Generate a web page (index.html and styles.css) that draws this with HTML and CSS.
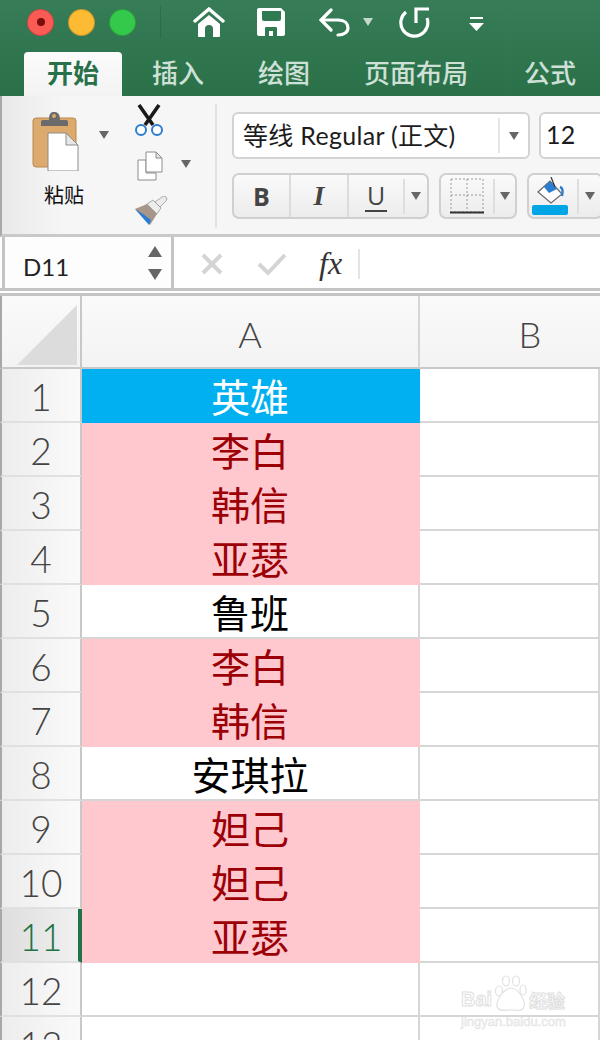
FILE: index.html
```html
<!DOCTYPE html>
<html>
<head lang="zh">
    <meta charset="UTF-8">
    <title>Excel</title>
    <link rel="stylesheet" href="styles.css">
</head>
<body>
<div class="wrap">
    <div class="top">
        <div class="titlebar">
            <div class="lights">
                <span class="light red"><i></i></span>
                <span class="light yellow"></span>
                <span class="light green"></span>
            </div>
            <span class="sep"></span>
            <svg class="qa home" width="32" height="31" viewBox="0 0 32 31"><path d="M2 14 16 2 30 14" fill="none" stroke="#fff" stroke-width="3.400" stroke-linecap="round"/><path d="M5 17 16 8 27 17V29a1 1 0 0 1-1 1H20V22a4 4 0 0 0-8 0V30H6a1 1 0 0 1-1-1Z" fill="#fff"/></svg>
            <svg class="qa save" width="28" height="28" viewBox="0 0 28 28"><path d="M2 0H24L28 4V26a2 2 0 0 1-2 2H2a2 2 0 0 1-2-2V2a2 2 0 0 1 2-2Z" fill="#fff"/><path d="M5 3H24V11a2 2 0 0 1-2 2H7a2 2 0 0 1-2-2Z" fill="#2f7a50"/><path d="M8 28V20a1 1 0 0 1 1-1H19a1 1 0 0 1 1 1V28H16V23H12V28Z" fill="#2f7a50"/></svg>
            <svg class="qa undo" width="31" height="29" viewBox="0 0 31 29"><path d="M12 2 2 12 12 22" fill="none" stroke="#fff" stroke-width="3.200" stroke-linecap="round"/><path d="M3 12H19C26 12 29 16 29 20S25 27 19 27" fill="none" stroke="#fff" stroke-width="3.200" stroke-linecap="round"/></svg>
            <span class="caret light-caret"></span>
            <svg class="qa redo" width="32" height="32" viewBox="0 0 32 32"><path d="M8 6A13.500 13.500 0 1 0 29 12" fill="none" stroke="#fff" stroke-width="3.200"/><path d="M18 17V3H31" fill="none" stroke="#fff" stroke-width="3.200"/></svg>
            <svg class="qa more" width="16" height="15" viewBox="0 0 16 15"><path d="M1 0H14V2H1ZM0 6H15L7.500 14Z" fill="#fff"/></svg>
        </div>
        <div class="tabs">
            <span class="tab active">开始</span>
            <span class="tab">插入</span>
            <span class="tab">绘图</span>
            <span class="tab">页面布局</span>
            <span class="tab">公式</span>
        </div>
    </div>
    <div class="ribbon">
        <div class="paste">
            <div class="paste-icon">
                <svg width="50" height="60" viewBox="0 0 50 60"><rect x="1" y="7" width="43" height="49" rx="3" fill="#dcaa6c" stroke="#b98a4e"/><path d="M9 14V10a2 2 0 0 1 2-2H17C17 1 19 0 22 0S28 1 28 8H34a2 2 0 0 1 2 2V14Z" fill="#6b6b6b" transform="translate(0 1)"/><circle cx="22" cy="5" r="2" fill="#dcaa6c"/><path d="M16 22H34L46 34V60H16Z" fill="#fff" stroke="#8c8c8c"/><path d="M34 22V34H46Z" fill="#e6e6e6" stroke="#8c8c8c"/></svg>
                <span class="caret"></span>
            </div>
            <span class="paste-label">粘贴</span>
        </div>
        <div class="tools">
            <svg width="30" height="34" viewBox="0 0 30 34"><path d="M5 1 19 21M25 1 11 21" stroke="#1a1a1a" stroke-width="3.600" fill="none"/><circle cx="7" cy="26" r="5" fill="#fff" stroke="#2b7cd3" stroke-width="2"/><circle cx="23" cy="26" r="5" fill="#fff" stroke="#2b7cd3" stroke-width="2"/></svg>
            <div class="copy">
                <svg width="28" height="30" viewBox="0 0 28 30"><path d="M2 9H10V22H20V29H2Z" fill="#fff" stroke="#8c8c8c"/><path d="M10 1H20L26 7V21H10Z" fill="#fff" stroke="#8c8c8c"/><path d="M20 1V7H26Z" fill="#e6e6e6" stroke="#8c8c8c"/></svg>
                <span class="caret"></span>
            </div>
            <svg class="brush" width="34" height="30" viewBox="0 0 34 30"><path d="M1 13 13 8 23 18 16 29Z" fill="#a8968a"/><path d="M1 13 9 18 17 24 15 29Z" fill="#2b7cd3"/><path d="M13 8 19 4 27 12 23 18Z" fill="#ececec" stroke="#8c8c8c" stroke-width=".7"/><path d="M21 6 28 1a2.500 2.500 0 0 1 4 4L26 11Z" fill="#ececec" stroke="#8c8c8c" stroke-width=".7"/></svg>
        </div>
        <span class="ribbon-sep"></span>
        <div class="fontgroup">
            <div class="fontrow">
                <div class="select fontname">
                    <span class="select-text">等线 Regular (正文)</span>
                    <span class="select-arrow"><span class="caret"></span></span>
                </div>
                <div class="select fontsize"><span class="select-text">12</span></div>
            </div>
            <div class="fontrow second">
                <div class="btngroup">
                    <span class="btn bold">B</span>
                    <span class="btn italic">I</span>
                    <span class="btn under"><span class="u-letter">U</span></span>
                    <span class="btn-arrow"><span class="caret"></span></span>
                </div>
                <div class="btngroup narrow">
                    <span class="btn borders"><svg width="34" height="36" viewBox="0 0 34 36"><path d="M1 1H33V34H1ZM17 1V33M1 17H33" fill="none" stroke="#9a9a9a" stroke-dasharray="2 2"/><path d="M0 34.500H34" stroke="#333" stroke-width="2"/></svg></span>
                    <span class="btn-arrow"><span class="caret"></span></span>
                </div>
                <div class="btngroup">
                    <span class="btn bucket"><svg width="36" height="38" viewBox="0 0 36 38"><path d="M6 15 18 4 30 17 19 26Z" fill="#fff" stroke="#666" stroke-width="1.200"/><path d="M12 10 18 4 25 12 17 16Z" fill="#2b7cd3"/><path d="M19 0 23 10" stroke="#333" stroke-width="1.200"/><path d="M28 10C31 11 31 15 30 19" stroke="#2b7cd3" stroke-width="2.400" fill="none"/><rect y="28" width="36" height="10" rx="2" fill="#00a5e6"/></svg></span>
                    <span class="btn-arrow"><span class="caret"></span></span>
                </div>
            </div>
        </div>
    </div>
    <div class="formula">
        <div class="namebox">
            <span class="cellname">D11</span>
            <span class="stepper"><i class="up"></i><i class="down"></i></span>
        </div>
        <div class="fx-tools">
            <svg class="fx-x" width="24" height="24" viewBox="0 0 24 24"><path d="M3 3 21 21M21 3 3 21" stroke="#d4d4d4" stroke-width="4"/></svg>
            <svg class="fx-ok" width="30" height="24" viewBox="0 0 30 24"><path d="M2 12 11 21 28 3" fill="none" stroke="#d4d4d4" stroke-width="4"/></svg>
            <span class="fx">fx</span>
            <span class="fx-sep"></span>
        </div>
    </div>
    <div class="sheet">
        <div class="corner"><span class="corner-tri"></span></div>
        <div class="colhead">A</div>
        <div class="colhead">B</div>

        <div class="rowhead">1</div><div class="cell title">英雄</div><div class="cell"></div>
        <div class="rowhead">2</div><div class="cell dup">李白</div><div class="cell"></div>
        <div class="rowhead">3</div><div class="cell dup">韩信</div><div class="cell"></div>
        <div class="rowhead">4</div><div class="cell dup">亚瑟</div><div class="cell"></div>
        <div class="rowhead">5</div><div class="cell">鲁班</div><div class="cell"></div>
        <div class="rowhead">6</div><div class="cell dup">李白</div><div class="cell"></div>
        <div class="rowhead">7</div><div class="cell dup">韩信</div><div class="cell"></div>
        <div class="rowhead">8</div><div class="cell">安琪拉</div><div class="cell"></div>
        <div class="rowhead">9</div><div class="cell dup">妲己</div><div class="cell"></div>
        <div class="rowhead">10</div><div class="cell dup">妲己</div><div class="cell"></div>
        <div class="rowhead current">11</div><div class="cell dup">亚瑟</div><div class="cell"></div>
        <div class="rowhead">12</div><div class="cell"></div><div class="cell"></div>
        <div class="rowhead">13</div><div class="cell"></div><div class="cell"></div>
    </div>
    <div class="mark">
        <div class="mark-top">
            <span class="mark-bai">Bai</span>
            <svg width="36" height="38" viewBox="0 0 36 38"><g fill="#fff" stroke="#e2e2e2" stroke-width="1.200"><ellipse cx="6" cy="16" rx="3.500" ry="5"/><ellipse cx="13" cy="6" rx="3.500" ry="5"/><ellipse cx="23" cy="6" rx="3.500" ry="5"/><ellipse cx="30" cy="15" rx="3" ry="5"/><path d="M18 13C24 13 33 24 31 32 29 37 23 35 18 35S6 37 4 32C3 25 11 13 18 13Z"/></g><text x="9" y="32" class="mark-du">du</text></svg>
            <span class="mark-cn">经验</span>
        </div>
        <div class="mark-url">jingyan.baidu.com</div>
    </div>
</div>
</body>
</html>
```

FILE: styles.css
```css
html, body{
    margin: 0;
    padding: 0;
}
body{
    font-family: "Lato", "Noto Sans CJK SC", sans-serif;
    background: #fff;
}
.wrap{
    width: 600px;
    height: 1040px;
    overflow: hidden;
    position: relative;
}
.top{
    height: 96px;
    background: linear-gradient(#367d58, #2a7149);
}
.titlebar{
    height: 52px;
    display: flex;
    align-items: center;
}
.lights{
    display: flex;
    gap: 14px;
    margin-left: 27px;
}
.light{
    width: 25px;
    height: 25px;
    border-radius: 50%;
    border: 1px solid rgba(0,0,0,.2);
    display: flex;
    align-items: center;
    justify-content: center;
    margin-top: -8px;
}
.light i{
    width: 8px;
    height: 8px;
    border-radius: 50%;
    background: #7a0c0c;
}
.red{ background: #fb5b55; }
.yellow{ background: #fdbb34; }
.green{ background: #35c94b; }
.sep{
    width: 1px;
    height: 32px;
    margin: -8px 0 0 24px;
    background: rgba(0,0,0,.12);
}
.qa{
    margin-top: -8px;
    flex: none;
}
.home{ margin-left: 32px; }
.save{ margin-left: 32px; }
.undo{ margin-left: 34px; }
.redo{ margin-left: 25px; }
.more{ margin-left: 39px; margin-top: -4px; }
.caret{
    display: inline-block;
    flex: none;
    width: 0;
    height: 0;
    border-left: 5px solid transparent;
    border-right: 5px solid transparent;
    border-top: 8px solid #666;
}
.light-caret{
    border-top-color: #c5d8cd;
    margin: -8px 0 0 13px;
}
.tabs{
    height: 44px;
    display: flex;
    align-items: stretch;
    padding-left: 24px;
    font-family: "Noto Sans CJK SC", sans-serif;
    font-size: 26px;
    font-weight: 500;
    color: #cfe0d6;
}
.tab{
    line-height: 39px;
    margin-left: 54px;
    white-space: nowrap;
}
.tab:nth-child(2){ margin-left: 30px; }
.tab:nth-child(5){ margin-left: 56px; }
.tab.active{
    margin-left: 0;
    width: 98px;
    text-align: center;
    background: linear-gradient(#fbfbfb, #f3f3f3);
    color: #27704a;
    font-weight: 700;
    border-radius: 4px 4px 0 0;
}
.ribbon{
    height: 141px;
    box-sizing: border-box;
    background: linear-gradient(90deg, #e9e9e9, #f6f6f6 60px);
    border-bottom: 3px solid #c9c9c9;
    border-left: 2px solid #a8a8a8;
    display: flex;
}
.paste{
    flex: none;
    width: 114px;
    padding: 13px 0 0 30px;
    box-sizing: border-box;
}
.paste-icon{
    display: flex;
    align-items: center;
    height: 60px;
    margin-top: 2px;
}
.paste-icon .caret{
    margin: -12px 0 0 17px;
}
.paste-label{
    display: block;
    font-family: "Noto Sans CJK SC", sans-serif;
    font-size: 20px;
    line-height: 30px;
    margin: 9px 0 0 12px;
    color: #111;
}
.tools{
    flex: none;
    width: 100px;
    padding: 8px 0 0 18px;
    box-sizing: border-box;
    display: flex;
    flex-direction: column;
}
.copy{
    display: flex;
    align-items: center;
    margin: 12px 0 0 2px;
    height: 32px;
}
.copy .caret{
    margin: -4px 0 0 17px;
}
.brush{
    margin-top: 14px;
}
.ribbon-sep{
    flex: none;
    width: 2px;
    height: 124px;
    margin: 8px 0 0 -1px;
    background: #e2e2e2;
}
.fontgroup{
    margin-left: 15px;
    padding-top: 16px;
    flex: none;
}
.fontrow{
    display: flex;
}
.fontrow.second{
    margin-top: 14px;
    gap: 10px;
}
.select{
    height: 47px;
    box-sizing: border-box;
    background: #fff;
    border: 2px solid #d3d3d3;
    border-radius: 6px;
    display: flex;
    align-items: center;
    font-size: 25px;
    letter-spacing: .3px;
    color: #1c1c1c;
}
.fontname{
    width: 298px;
}
.fontsize{
    width: 80px;
    margin-left: 9px;
}
.fontsize .select-text{
    padding-left: 5px;
}
.select-text{
    padding: 0 0 4px 9px;
    flex: 1;
    white-space: nowrap;
}
.select-arrow{
    width: 28px;
    height: 35px;
    border-left: 2px solid #e6e6e6;
    display: flex;
    align-items: center;
    justify-content: center;
}
.btngroup{
    height: 46px;
    box-sizing: border-box;
    display: flex;
    align-items: center;
    background: linear-gradient(#fafafa, #ececec);
    border: 2px solid #d0d0d0;
    border-radius: 7px;
}
.btn{
    height: 42px;
    display: flex;
    align-items: center;
    justify-content: center;
    color: #444;
}
.bold{
    width: 55px;
    border-right: 2px solid #dcdcdc;
    font: bold 25px "Open Sans", sans-serif;
}
.italic{
    width: 56px;
    border-right: 2px solid #dcdcdc;
    font: italic bold 28px "Liberation Serif", serif;
}
.under{
    width: 54px;
    font: 25px "Open Sans", sans-serif;
}
.u-letter{
    border-bottom: 2px solid #444;
    line-height: 29px;
    padding: 0 2px;
}
.btn-arrow{
    width: 22px;
    height: 35px;
    border-left: 2px solid #dedede;
    display: flex;
    align-items: center;
    justify-content: center;
}
.narrow .btn-arrow{
    width: 20px;
}
.borders{
    width: 52px;
}
.bucket{
    width: 45px;
    padding-left: 3px;
    justify-content: flex-start;
}
.formula{
    height: 54px;
    display: flex;
    background: #fff;
    border-bottom: 3px solid #c4c4c4;
    box-sizing: border-box;
}
.namebox{
    flex: none;
    width: 172px;
    height: 51px;
    box-sizing: border-box;
    margin-left: 2px;
    padding-top: 7px;
    border: 3px solid #c4c4c4;
    border-bottom: 0;
    border-top: 0;
    display: flex;
    align-items: center;
    background: #fdfdfd;
}
.cellname{
    margin-left: 18px;
    font-size: 24px;
    color: #222;
    flex: 1;
}
.stepper{
    display: flex;
    flex-direction: column;
    gap: 12px;
    margin: -7px 9px 0 0;
}
.stepper i{
    width: 0;
    height: 0;
    border-left: 7px solid transparent;
    border-right: 7px solid transparent;
}
.stepper .up{
    border-bottom: 11px solid #666;
}
.stepper .down{
    border-top: 11px solid #666;
}
.fx-tools{
    display: flex;
    align-items: center;
    padding: 2px 0 0 26px;
}
.fx-ok{
    margin-left: 33px;
}
.fx{
    margin-left: 32px;
    font: italic 32px "Liberation Serif", serif;
    color: #333;
}
.fx-sep{
    width: 2px;
    height: 30px;
    margin-left: 16px;
    background: #e4e4e4;
}
.sheet{
    margin-top: 2px;
    border-top: 3px solid #c4c4c4;
    display: grid;
    grid-template-columns: 82px 338px 180px;
    grid-template-rows: 73px;
    grid-auto-rows: 54px;
}
.corner, .colhead{
    height: 73px;
    box-sizing: border-box;
    background: linear-gradient(#fafafa, #f3f3f3);
    border-bottom: 2px solid #c8c8c8;
    border-right: 2px solid #d6d6d6;
}
.corner{
    border-left: 2px solid #a8a8a8;
    border-right: 2px solid #c8c8c8;
    padding: 9px 3px 0 15px;
}
.corner-tri{
    display: block;
    width: 0;
    height: 0;
    border-left: 60px solid transparent;
    border-bottom: 60px solid #dcdcdc;
}
.colhead{
    text-align: center;
    font-size: 36px;
    font-weight: 300;
    line-height: 76px;
    color: #444;
}
.colhead:nth-child(3){
    border-right: 0;
    padding-left: 40px;
}
.rowhead{
    box-sizing: border-box;
    background: linear-gradient(90deg, #ededed, #fafafa);
    border-left: 2px solid #a8a8a8;
    border-right: 2px solid #c8c8c8;
    border-bottom: 2px solid #e0e0e0;
    text-align: center;
    font-size: 37px;
    font-weight: 300;
    line-height: 56px;
    color: #444;
}
.rowhead.current{
    color: #217346;
    background: linear-gradient(90deg, #dedede, #f0f0f0);
    border-right: 4px solid #217346;
    padding-left: 2px;
}
.cell{
    box-sizing: border-box;
    border-right: 2px solid #d6d6d6;
    border-bottom: 2px solid #d6d6d6;
    text-align: center;
    font-family: "Noto Sans CJK SC", sans-serif;
    font-size: 39px;
    line-height: 52px;
    color: #000;
}
.cell.title{
    background: #00b0f0;
    color: #fff;
    border-color: #00b0f0;
}
.cell.dup{
    background: #ffc7ce;
    color: #9c0006;
    border-color: #ffc7ce;
}
.mark{
    position: absolute;
    left: 461px;
    top: 975px;
    width: 110px;
    color: #fff;
    -webkit-text-stroke: 1px #e0e0e0;
    font-family: "Liberation Sans", sans-serif;
}
.mark-top{
    display: flex;
    align-items: flex-end;
    height: 38px;
    font-size: 20px;
    font-weight: bold;
    line-height: 24px;
}
.mark-top svg{
    margin-left: 1px;
}
.mark-bai{
    margin-bottom: 2px;
}
.mark-du{
    font-size: 14px;
    fill: #fff;
}
.mark-cn{
    font-family: "Noto Sans CJK SC", sans-serif;
    font-size: 18px;
    margin-bottom: 1px;
}
.mark-url{
    font-size: 13px;
    line-height: 14px;
    -webkit-text-stroke: .4px #e0e0e0;
    color: #efefef;
    white-space: nowrap;
    margin-top: 2px;
}
```
